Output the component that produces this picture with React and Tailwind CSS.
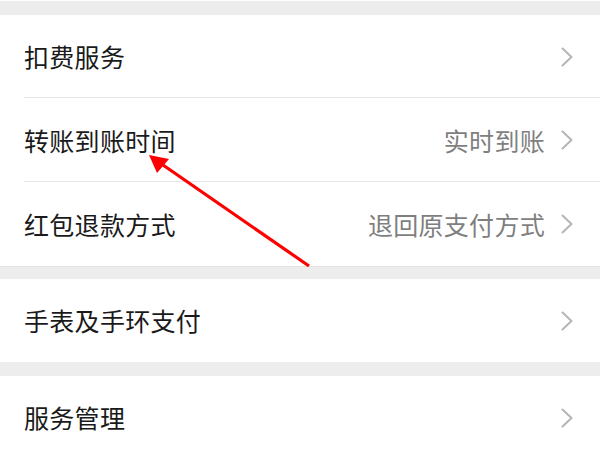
import React from "react";

function Chevron() {
  return (
    <svg width="12" height="20" viewBox="0 0 12 20" className="shrink-0">
      <polyline points="1.5,1.5 10.5,10 1.5,18.5" fill="none" stroke="#b5b5b5" strokeWidth="2" strokeLinecap="round" strokeLinejoin="round" />
    </svg>
  );
}

function Row({ label, value, divider, h = "h-[83px]" }) {
  return (
    <div className={`relative flex items-center ${h} pl-[24px] pr-[27px] bg-white`}>
      <span className="text-[25px] tracking-[0.3px] text-[#1a1a1a] leading-none flex-1">{label}</span>
      {value && <span className="text-[25px] tracking-[0.3px] text-[#7f7f7f] leading-none mr-[16px]">{value}</span>}
      <Chevron />
      {divider && <div className="absolute left-[24px] right-0 bottom-0 h-px bg-[#e6e6e6]" />}
    </div>
  );
}

export default function App() {
  return (
    <div
      className="relative w-[600px] h-[450px] overflow-hidden bg-white"
      style={{ fontFamily: '"Noto Sans CJK SC", "Noto Sans", sans-serif' }}
    >
      <div className="h-px bg-white" />
      <div className="h-[14px] bg-[#ededed]" />
      <Row label="扣费服务" divider />
      <Row label="转账到账时间" value="实时到账" divider h="h-[84px]" />
      <Row label="红包退款方式" value="退回原支付方式" h="h-[84px]" />
      <div className="h-[13px] bg-[#ededed] border-t border-[#e3e3e3]" />
      <Row label="手表及手环支付" />
      <div className="h-[14px] bg-[#ededed]" />
      <Row label="服务管理" />
      <svg className="absolute inset-0 pointer-events-none" width="600" height="450" viewBox="0 0 600 450">
        <line x1="309" y1="266" x2="163" y2="165" stroke="#ff0000" strokeWidth="3.2" />
        <polygon points="149,155 169,159 157,173" fill="#ff0000" />
      </svg>
    </div>
  );
}
